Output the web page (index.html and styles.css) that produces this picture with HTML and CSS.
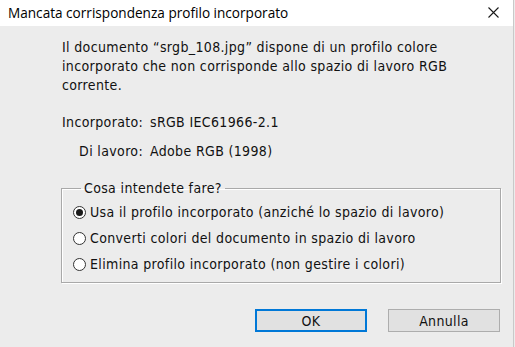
FILE: index.html
```html
<!DOCTYPE html>
<html lang="it">
<head>
<meta charset="utf-8">
<title>Mancata corrispondenza profilo incorporato</title>
<link rel="stylesheet" href="styles.css">
</head>
<body>
<div class="window">
  <div class="titlebar">
    <span class="title">Mancata corrispondenza profilo incorporato</span>
    <span class="close" aria-label="Chiudi">
      <svg width="11" height="11" viewBox="0 0 11 11"><path d="M0.5 0.5 L10.5 10.5 M10.5 0.5 L0.5 10.5" stroke="#1a1a1a" stroke-width="1.1" fill="none"/></svg>
    </span>
  </div>
  <div class="content">
    <p class="message">Il documento “srgb_108.jpg” dispone di un profilo colore<br>incorporato che non corrisponde allo spazio di lavoro RGB<br>corrente.</p>
    <div class="info">
      <span class="label">Incorporato:</span><span class="value">sRGB IEC61966-2.1</span>
      <span class="label">Di lavoro:</span><span class="value">Adobe RGB (1998)</span>
    </div>
    <fieldset class="group">
      <legend>Cosa intendete fare?</legend>
      <label class="option"><input type="radio" name="act" checked><span>Usa il profilo incorporato (anziché lo spazio di lavoro)</span></label>
      <label class="option"><input type="radio" name="act"><span>Converti colori del documento in spazio di lavoro</span></label>
      <label class="option"><input type="radio" name="act"><span>Elimina profilo incorporato (non gestire i colori)</span></label>
    </fieldset>
    <div class="buttons">
      <button class="btn default">OK</button>
      <button class="btn">Annulla</button>
    </div>
  </div>
</div>
</body>
</html>
```
FILE: styles.css
```css
html, body {
  margin: 0;
  padding: 0;
  background: #ececec;
}
.window {
  width: 514px;
  height: 347px;
  box-sizing: border-box;
  border-right: 1px solid #c9c9c9;
  background: #ececec;
  display: flex;
  flex-direction: column;
  font-family: "DejaVu Sans Condensed", "DejaVu Sans", sans-serif;
  font-size: 14px;
  letter-spacing: 0.35px;
  color: #111;
}
.titlebar {
  height: 26px;
  background: #fff;
  display: flex;
  align-items: center;
  justify-content: space-between;
  padding: 0 14px 0 8px;
  box-sizing: border-box;
  letter-spacing: 0;
}
.title {
  font-family: "Open Sans", "Noto Sans", sans-serif;
  font-size: 13.6px;
  color: #000;
  padding-bottom: 2px;
}
.close {
  display: flex;
  align-items: center;
  padding-bottom: 2px;
}
.content {
  padding: 0 0 0 62px;
  display: flex;
  flex-direction: column;
}
.message {
  margin: 12px 0 0 0;
  line-height: 19px;
}
.info {
  margin-top: 18px;
  display: grid;
  grid-template-columns: 81px auto;
  column-gap: 7px;
  row-gap: 10px;
  line-height: 19px;
}
.label {
  text-align: right;
}
.group {
  margin: 18px 0 0 -1px;
  width: 440px;
  box-sizing: border-box;
  border: 1px solid #a9a9a9;
  box-shadow: inset 1px 1px 0 #fff, 1px 1px 0 #fff;
  padding: 5px 0 8px 11px;
  display: flex;
  flex-direction: column;
  gap: 7px;
}
.group legend {
  margin-left: 8px;
  padding: 0 3px;
  line-height: 19px;
}
.option {
  display: flex;
  align-items: center;
  line-height: 19px;
  gap: 4px;
}
.option input {
  appearance: none;
  -webkit-appearance: none;
  margin: 0;
  width: 13px;
  height: 13px;
  border: 1px solid #333;
  border-radius: 50%;
  background: #fff;
  box-sizing: border-box;
  display: grid;
  place-items: center;
}
.option input:checked::after {
  content: "";
  width: 7px;
  height: 7px;
  border-radius: 50%;
  background: #1a1a1a;
}
.buttons {
  display: flex;
  justify-content: flex-end;
  gap: 21px;
  padding-right: 13px;
  margin-top: 26px;
}
.btn {
  width: 112px;
  height: 23px;
  box-sizing: border-box;
  background: #e1e1e1;
  border: 1px solid #adadad;
  font-family: "DejaVu Sans Condensed", "DejaVu Sans", sans-serif;
  font-size: 14px;
  letter-spacing: 0.35px;
  color: #111;
  padding: 0;
}
.btn.default {
  border: 2px solid #0078d7;
}
```
